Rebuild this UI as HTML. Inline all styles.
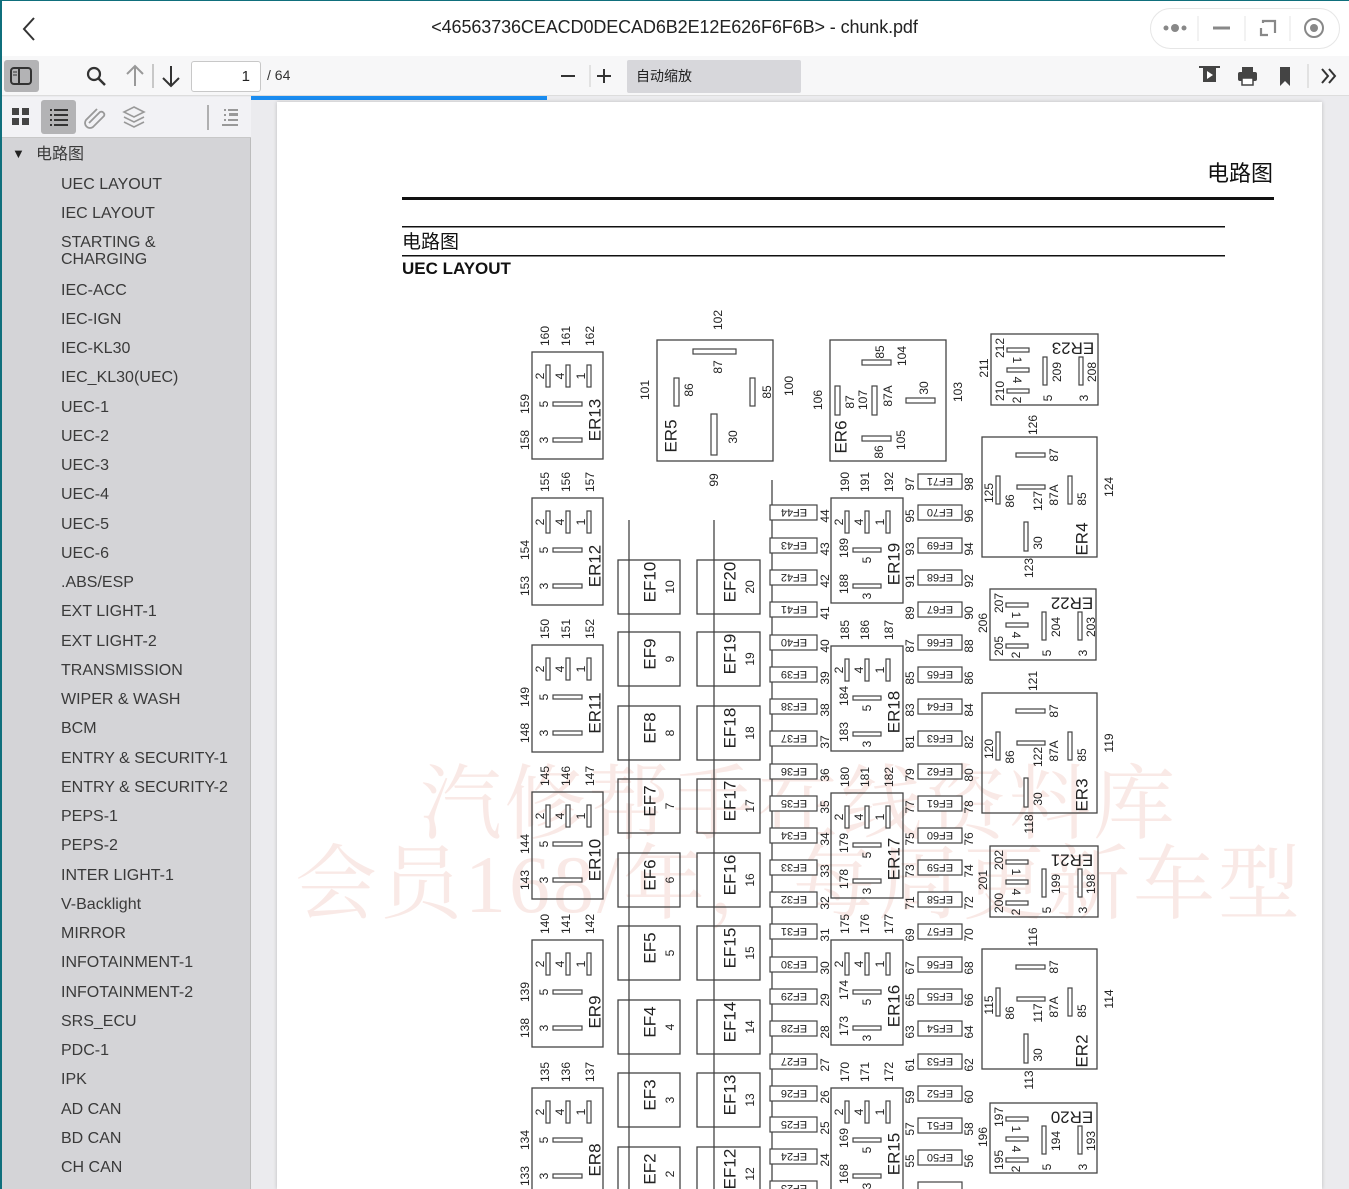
<!DOCTYPE html>
<html><head><meta charset="utf-8"><style>
*{margin:0;padding:0;box-sizing:border-box}
body{width:1349px;height:1189px;overflow:hidden;background:#ebebee;font-family:"Liberation Sans","Noto Sans CJK SC",sans-serif;position:relative}
.abs{position:absolute}
#title{left:0;top:0;width:1349px;height:56px;background:#fff}
#title .t{left:0;width:1349px;top:17px;text-align:center;font-size:18px;color:#222;letter-spacing:-0.1px}
#tb{left:0;top:56px;width:1349px;height:40px;background:#f7f7f8;border-bottom:1px solid #ddd}
#side{left:0;top:97px;width:251px;height:1092px;background:#d4d4d7;border-right:1px solid #bcbcbc}
#sidehead{left:0;top:97px;width:251px;height:41px;background:#f2f2f5;border-bottom:1px solid #c8c8c8}
.it{position:absolute;left:61px;font-size:16px;color:#3a3a3a;line-height:17px}
#page{left:277px;top:102px;width:1045px;height:1087px;background:#fff;box-shadow:0 0 4px rgba(0,0,0,.2)}
svg text{font-family:"Liberation Sans",sans-serif}
.b{fill:none;stroke:#444;stroke-width:1.3}
.p{fill:#fff;stroke:#444;stroke-width:1.2}
.n{font-size:12px;text-anchor:middle;dominant-baseline:central;fill:#222}
.L{font-size:17px;text-anchor:middle;dominant-baseline:central;fill:#222}
.s{font-size:11px;text-anchor:middle;dominant-baseline:central;fill:#222}
</style></head><body>
<div id="title" class="abs">
<svg class="abs" style="left:18px;top:16px" width="22" height="26"><path d="M16 2 L6 13 L16 24" fill="none" stroke="#333" stroke-width="2"/></svg>
<div class="abs t">&lt;46563736CEACD0DECAD6B2E12E626F6F6B&gt; - chunk.pdf</div>
<div class="abs" style="left:1150px;top:8px;width:190px;height:41px;border:1px solid #e6e6e6;border-radius:21px"></div>
<svg class="abs" style="left:1150px;top:8px" width="190" height="41">
<circle cx="16" cy="20" r="2.5" fill="#888"/><circle cx="25" cy="20" r="4" fill="#888"/><circle cx="34" cy="20" r="2.5" fill="#888"/>
<line x1="48" y1="8" x2="48" y2="33" stroke="#e6e6e6"/>
<line x1="63" y1="20" x2="80" y2="20" stroke="#888" stroke-width="3"/>
<line x1="95" y1="8" x2="95" y2="33" stroke="#e6e6e6"/>
<path d="M113 15 V13 H125 V25 M111 20 V27 H118" fill="none" stroke="#888" stroke-width="2.2"/>
<line x1="140" y1="8" x2="140" y2="33" stroke="#e6e6e6"/>
<circle cx="164" cy="20" r="9" fill="none" stroke="#888" stroke-width="2"/><circle cx="164" cy="20" r="4" fill="#888"/>
</svg>
</div>
<div id="tb" class="abs">
<div class="abs" style="left:4px;top:4px;width:35px;height:32px;background:#b3b3b5;border-radius:3px"></div>
<svg class="abs" style="left:0;top:0" width="1349" height="40">
<rect x="11" y="12" width="20" height="16" rx="3" fill="none" stroke="#333" stroke-width="2"/><line x1="19" y1="12" x2="19" y2="28" stroke="#333" stroke-width="2"/><line x1="13" y1="16" x2="17" y2="16" stroke="#333"/><line x1="13" y1="19" x2="17" y2="19" stroke="#333"/>
<circle cx="94" cy="18" r="6" fill="none" stroke="#333" stroke-width="2.2"/><line x1="98" y1="22" x2="105" y2="29" stroke="#333" stroke-width="2.5"/>
<path d="M135 30 V10 M127 18 L135 10 L143 18" fill="none" stroke="#999" stroke-width="2"/>
<line x1="153" y1="8" x2="153" y2="32" stroke="#999"/>
<path d="M171 10 V30 M163 22 L171 30 L179 22" fill="none" stroke="#333" stroke-width="2"/>
<line x1="561" y1="20" x2="575" y2="20" stroke="#333" stroke-width="2"/>
<line x1="590" y1="9" x2="590" y2="31" stroke="#ccc"/>
<path d="M597 20 H611 M604 13 V27" stroke="#333" stroke-width="2"/>
<path d="M777 17 L781 21 L785 17" fill="none" stroke="#222" stroke-width="2"/>
<rect x="1203" y="12" width="13" height="14" fill="#444"/><path d="M1207 15 L1213 19 L1207 23Z" fill="#fff"/><line x1="1199" y1="11" x2="1220" y2="11" stroke="#444" stroke-width="2"/>
<rect x="1238" y="16" width="19" height="9" rx="2" fill="#444"/><rect x="1242" y="11" width="11" height="5" fill="#444"/><rect x="1242" y="22" width="11" height="7" fill="#fff" stroke="#444" stroke-width="1.5"/>
<path d="M1280 11 H1290 V30 L1285 25 L1280 30Z" fill="#444"/>
<line x1="1308" y1="8" x2="1308" y2="32" stroke="#ccc"/>
<path d="M1322 13 L1328 20 L1322 27 M1329 13 L1335 20 L1329 27" fill="none" stroke="#333" stroke-width="2"/>
</svg>
<div class="abs" style="left:191px;top:5px;width:70px;height:31px;background:#fff;border:1px solid #c8c8c8;border-radius:3px;text-align:right;padding-right:10px;font-size:15px;line-height:29px;color:#222">1</div>
<div class="abs" style="left:267px;top:11px;font-size:14px;color:#333">/ 64</div>
<div class="abs" style="left:627px;top:4px;width:174px;height:33px;background:#d7d7db;border-radius:2px;font-size:14px;line-height:33px;padding-left:9px;color:#222;font-family:'Liberation Sans','Noto Sans CJK SC',sans-serif">自动缩放</div>
</div>
<div class="abs" style="left:251px;top:96px;width:296px;height:4px;background:#1a8cf0"></div>
<div id="side" class="abs"></div>
<div id="sidehead" class="abs">
<div class="abs" style="left:41px;top:3px;width:35px;height:34px;background:#b3b3b5;border-radius:3px"></div>
<svg class="abs" style="left:0;top:0" width="251" height="41">
<rect x="12" y="11" width="7" height="7" fill="#444"/><rect x="22" y="11" width="7" height="7" fill="#444"/><rect x="12" y="21" width="7" height="7" fill="#444"/><rect x="22" y="21" width="7" height="7" fill="#444"/>
<g fill="#333"><rect x="50" y="12" width="2" height="2"/><rect x="54" y="12" width="14" height="2"/><rect x="50" y="17" width="2" height="2"/><rect x="54" y="17" width="14" height="2"/><rect x="50" y="22" width="2" height="2"/><rect x="54" y="22" width="14" height="2"/><rect x="50" y="27" width="2" height="2"/><rect x="54" y="27" width="14" height="2"/></g>
<path d="M89 26 L100 15 A3 3 0 0 1 104 19 L93 30 A5 5 0 0 1 86 23 L97 12" fill="none" stroke="#999" stroke-width="1.8"/>
<path d="M134 10 L144 15 L134 20 L124 15Z M124 20 L134 25 L144 20 M124 25 L134 30 L144 25" fill="none" stroke="#999" stroke-width="1.6"/>
<line x1="208" y1="8" x2="208" y2="33" stroke="#999" stroke-width="1.5"/>
<g fill="#999"><rect x="224" y="12" width="2" height="2"/><rect x="228" y="12" width="10" height="2"/><rect x="224" y="17" width="2" height="2"/><rect x="229" y="16" width="9" height="3"/><rect x="224" y="22" width="2" height="2"/><rect x="228" y="22" width="10" height="2"/><rect x="222" y="27" width="16" height="2"/></g>
</svg>
</div>
<div class="abs" style="left:12px;top:146px;font-size:13px;color:#222">▼</div>
<div class="it" style="top:146px;left:36px;font-family:'Liberation Sans','Noto Sans CJK SC',sans-serif">电路图</div>
<div class="it" style="top:176px">UEC LAYOUT</div>
<div class="it" style="top:205px">IEC LAYOUT</div>
<div class="it" style="top:234px">STARTING &amp;<br>CHARGING</div>
<div class="it" style="top:282px">IEC-ACC</div>
<div class="it" style="top:311px">IEC-IGN</div>
<div class="it" style="top:340px">IEC-KL30</div>
<div class="it" style="top:369px">IEC_KL30(UEC)</div>
<div class="it" style="top:399px">UEC-1</div>
<div class="it" style="top:428px">UEC-2</div>
<div class="it" style="top:457px">UEC-3</div>
<div class="it" style="top:486px">UEC-4</div>
<div class="it" style="top:516px">UEC-5</div>
<div class="it" style="top:545px">UEC-6</div>
<div class="it" style="top:574px">.ABS/ESP</div>
<div class="it" style="top:603px">EXT LIGHT-1</div>
<div class="it" style="top:633px">EXT LIGHT-2</div>
<div class="it" style="top:662px">TRANSMISSION</div>
<div class="it" style="top:691px">WIPER &amp; WASH</div>
<div class="it" style="top:720px">BCM</div>
<div class="it" style="top:750px">ENTRY &amp; SECURITY-1</div>
<div class="it" style="top:779px">ENTRY &amp; SECURITY-2</div>
<div class="it" style="top:808px">PEPS-1</div>
<div class="it" style="top:837px">PEPS-2</div>
<div class="it" style="top:867px">INTER LIGHT-1</div>
<div class="it" style="top:896px">V-Backlight</div>
<div class="it" style="top:925px">MIRROR</div>
<div class="it" style="top:954px">INFOTAINMENT-1</div>
<div class="it" style="top:984px">INFOTAINMENT-2</div>
<div class="it" style="top:1013px">SRS_ECU</div>
<div class="it" style="top:1042px">PDC-1</div>
<div class="it" style="top:1071px">IPK</div>
<div class="it" style="top:1101px">AD CAN</div>
<div class="it" style="top:1130px">BD CAN</div>
<div class="it" style="top:1159px">CH CAN</div>
<div id="page" class="abs"></div>
<svg class="abs" style="left:0;top:0" width="1349" height="1189">
<g font-family="'Liberation Sans','Noto Sans CJK SC',sans-serif">
<text x="1273" y="181" text-anchor="end" font-size="22" fill="#111" style="font-family:'Liberation Sans','Noto Sans CJK SC',sans-serif">电路图</text>
<rect x="402" y="197" width="872" height="3" fill="#111"/>
<rect x="402" y="226" width="823" height="1.5" fill="#111"/>
<text x="402" y="248" font-size="19" fill="#111" style="font-family:'Liberation Sans','Noto Sans CJK SC',sans-serif">电路图</text>
<rect x="402" y="255" width="823" height="1.5" fill="#111"/>
<text x="402" y="274" font-size="17" font-weight="bold" fill="#111">UEC LAYOUT</text>
</g>
<g opacity="0.22" fill="#e8a090">
<text x="420" y="832" font-size="82" textLength="755" style="font-family:'Liberation Serif','Noto Serif CJK SC',serif">汽修帮手在线资料库</text>
<text x="295" y="912" font-size="82" textLength="1005" style="font-family:'Liberation Serif','Noto Serif CJK SC',serif">会员168/年，每周更新车型</text>
</g>
<line x1="629" y1="520" x2="629" y2="1189" class="b"/>
<line x1="714" y1="520" x2="714" y2="1189" class="b"/>
<line x1="772" y1="480" x2="772" y2="1189" class="b"/>
<g transform="translate(657 340)"><rect class="b" width="116" height="121"/>
<rect class="p" x="36" y="9" width="43" height="5"/><rect class="p" x="17" y="38" width="5" height="28"/><rect class="p" x="93" y="38" width="5" height="28"/><rect class="p" x="54" y="74" width="6" height="41"/>
<text class="n" transform="translate(61 27) rotate(-90)">87</text><text class="n" transform="translate(32 50) rotate(-90)">86</text><text class="n" transform="translate(110 52) rotate(-90)">85</text><text class="n" transform="translate(76 97) rotate(-90)">30</text>
<text class="L" transform="translate(14 96) rotate(-90)">ER5</text>
<text class="n" transform="translate(61 -20) rotate(-90)">102</text><text class="n" transform="translate(-12 50) rotate(-90)">101</text><text class="n" transform="translate(132 46) rotate(-90)">100</text><text class="n" transform="translate(57 140) rotate(-90)">99</text></g>
<g transform="translate(830 340)"><rect class="b" width="116" height="121"/>
<rect class="p" x="32" y="20" width="29" height="5"/><rect class="p" x="5" y="46" width="5" height="29"/><rect class="p" x="42" y="46" width="5" height="29"/><rect class="p" x="76" y="58" width="29" height="5"/><rect class="p" x="32" y="96" width="29" height="5"/>
<text class="n" transform="translate(50 12) rotate(-90)">85</text><text class="n" transform="translate(72 16) rotate(-90)">104</text><text class="n" transform="translate(20 62) rotate(-90)">87</text><text class="n" transform="translate(33 60) rotate(-90)">107</text><text class="n" transform="translate(58 56) rotate(-90)">87A</text><text class="n" transform="translate(94 48) rotate(-90)">30</text><text class="n" transform="translate(49 112) rotate(-90)">86</text><text class="n" transform="translate(71 100) rotate(-90)">105</text>
<text class="L" transform="translate(11 97) rotate(-90)">ER6</text>
<text class="n" transform="translate(-12 60) rotate(-90)">106</text><text class="n" transform="translate(128 52) rotate(-90)">103</text></g>
<g transform="translate(532 352)"><rect class="b" width="71" height="107"/><rect class="p" x="14" y="13" width="4" height="22"/><rect class="p" x="34" y="13" width="4" height="22"/><rect class="p" x="55" y="13" width="4" height="22"/><rect class="p" x="21" y="50" width="29" height="4"/><rect class="p" x="21" y="86" width="29" height="4"/><text class="n" transform="translate(8 24) rotate(-90)">2</text><text class="n" transform="translate(28 24) rotate(-90)">4</text><text class="n" transform="translate(49 24) rotate(-90)">1</text><text class="n" transform="translate(12 52) rotate(-90)">5</text><text class="n" transform="translate(12 88) rotate(-90)">3</text><text class="L" transform="translate(63 68) rotate(-90)">ER13</text><text class="n" transform="translate(13 -16) rotate(-90)">160</text><text class="n" transform="translate(34 -16) rotate(-90)">161</text><text class="n" transform="translate(58 -16) rotate(-90)">162</text><text class="n" transform="translate(-7 52) rotate(-90)">159</text><text class="n" transform="translate(-7 88) rotate(-90)">158</text></g>
<g transform="translate(532 498)"><rect class="b" width="71" height="107"/><rect class="p" x="14" y="13" width="4" height="22"/><rect class="p" x="34" y="13" width="4" height="22"/><rect class="p" x="55" y="13" width="4" height="22"/><rect class="p" x="21" y="50" width="29" height="4"/><rect class="p" x="21" y="86" width="29" height="4"/><text class="n" transform="translate(8 24) rotate(-90)">2</text><text class="n" transform="translate(28 24) rotate(-90)">4</text><text class="n" transform="translate(49 24) rotate(-90)">1</text><text class="n" transform="translate(12 52) rotate(-90)">5</text><text class="n" transform="translate(12 88) rotate(-90)">3</text><text class="L" transform="translate(63 68) rotate(-90)">ER12</text><text class="n" transform="translate(13 -16) rotate(-90)">155</text><text class="n" transform="translate(34 -16) rotate(-90)">156</text><text class="n" transform="translate(58 -16) rotate(-90)">157</text><text class="n" transform="translate(-7 52) rotate(-90)">154</text><text class="n" transform="translate(-7 88) rotate(-90)">153</text></g>
<g transform="translate(532 645)"><rect class="b" width="71" height="107"/><rect class="p" x="14" y="13" width="4" height="22"/><rect class="p" x="34" y="13" width="4" height="22"/><rect class="p" x="55" y="13" width="4" height="22"/><rect class="p" x="21" y="50" width="29" height="4"/><rect class="p" x="21" y="86" width="29" height="4"/><text class="n" transform="translate(8 24) rotate(-90)">2</text><text class="n" transform="translate(28 24) rotate(-90)">4</text><text class="n" transform="translate(49 24) rotate(-90)">1</text><text class="n" transform="translate(12 52) rotate(-90)">5</text><text class="n" transform="translate(12 88) rotate(-90)">3</text><text class="L" transform="translate(63 68) rotate(-90)">ER11</text><text class="n" transform="translate(13 -16) rotate(-90)">150</text><text class="n" transform="translate(34 -16) rotate(-90)">151</text><text class="n" transform="translate(58 -16) rotate(-90)">152</text><text class="n" transform="translate(-7 52) rotate(-90)">149</text><text class="n" transform="translate(-7 88) rotate(-90)">148</text></g>
<g transform="translate(532 792)"><rect class="b" width="71" height="107"/><rect class="p" x="14" y="13" width="4" height="22"/><rect class="p" x="34" y="13" width="4" height="22"/><rect class="p" x="55" y="13" width="4" height="22"/><rect class="p" x="21" y="50" width="29" height="4"/><rect class="p" x="21" y="86" width="29" height="4"/><text class="n" transform="translate(8 24) rotate(-90)">2</text><text class="n" transform="translate(28 24) rotate(-90)">4</text><text class="n" transform="translate(49 24) rotate(-90)">1</text><text class="n" transform="translate(12 52) rotate(-90)">5</text><text class="n" transform="translate(12 88) rotate(-90)">3</text><text class="L" transform="translate(63 68) rotate(-90)">ER10</text><text class="n" transform="translate(13 -16) rotate(-90)">145</text><text class="n" transform="translate(34 -16) rotate(-90)">146</text><text class="n" transform="translate(58 -16) rotate(-90)">147</text><text class="n" transform="translate(-7 52) rotate(-90)">144</text><text class="n" transform="translate(-7 88) rotate(-90)">143</text></g>
<g transform="translate(532 940)"><rect class="b" width="71" height="107"/><rect class="p" x="14" y="13" width="4" height="22"/><rect class="p" x="34" y="13" width="4" height="22"/><rect class="p" x="55" y="13" width="4" height="22"/><rect class="p" x="21" y="50" width="29" height="4"/><rect class="p" x="21" y="86" width="29" height="4"/><text class="n" transform="translate(8 24) rotate(-90)">2</text><text class="n" transform="translate(28 24) rotate(-90)">4</text><text class="n" transform="translate(49 24) rotate(-90)">1</text><text class="n" transform="translate(12 52) rotate(-90)">5</text><text class="n" transform="translate(12 88) rotate(-90)">3</text><text class="L" transform="translate(63 72) rotate(-90)">ER9</text><text class="n" transform="translate(13 -16) rotate(-90)">140</text><text class="n" transform="translate(34 -16) rotate(-90)">141</text><text class="n" transform="translate(58 -16) rotate(-90)">142</text><text class="n" transform="translate(-7 52) rotate(-90)">139</text><text class="n" transform="translate(-7 88) rotate(-90)">138</text></g>
<g transform="translate(532 1088)"><rect class="b" width="71" height="107"/><rect class="p" x="14" y="13" width="4" height="22"/><rect class="p" x="34" y="13" width="4" height="22"/><rect class="p" x="55" y="13" width="4" height="22"/><rect class="p" x="21" y="50" width="29" height="4"/><rect class="p" x="21" y="86" width="29" height="4"/><text class="n" transform="translate(8 24) rotate(-90)">2</text><text class="n" transform="translate(28 24) rotate(-90)">4</text><text class="n" transform="translate(49 24) rotate(-90)">1</text><text class="n" transform="translate(12 52) rotate(-90)">5</text><text class="n" transform="translate(12 88) rotate(-90)">3</text><text class="L" transform="translate(63 72) rotate(-90)">ER8</text><text class="n" transform="translate(13 -16) rotate(-90)">135</text><text class="n" transform="translate(34 -16) rotate(-90)">136</text><text class="n" transform="translate(58 -16) rotate(-90)">137</text><text class="n" transform="translate(-7 52) rotate(-90)">134</text><text class="n" transform="translate(-7 88) rotate(-90)">133</text></g>
<g transform="translate(831 498)"><rect class="b" width="72" height="105"/><rect class="p" x="14" y="13" width="4" height="22"/><rect class="p" x="34" y="13" width="4" height="22"/><rect class="p" x="55" y="13" width="4" height="22"/><rect class="p" x="22" y="50" width="28" height="4"/><rect class="p" x="22" y="86" width="28" height="4"/><text class="n" transform="translate(8 24) rotate(-90)">2</text><text class="n" transform="translate(28 24) rotate(-90)">4</text><text class="n" transform="translate(49 24) rotate(-90)">1</text><text class="n" transform="translate(13 50) rotate(-90)">189</text><text class="n" transform="translate(36 62) rotate(-90)">5</text><text class="n" transform="translate(13 86) rotate(-90)">188</text><text class="n" transform="translate(36 98) rotate(-90)">3</text><text class="L" transform="translate(63 66) rotate(-90)">ER19</text><text class="n" transform="translate(14 -16) rotate(-90)">190</text><text class="n" transform="translate(34 -16) rotate(-90)">191</text><text class="n" transform="translate(58 -16) rotate(-90)">192</text></g>
<g transform="translate(831 646)"><rect class="b" width="72" height="105"/><rect class="p" x="14" y="13" width="4" height="22"/><rect class="p" x="34" y="13" width="4" height="22"/><rect class="p" x="55" y="13" width="4" height="22"/><rect class="p" x="22" y="50" width="28" height="4"/><rect class="p" x="22" y="86" width="28" height="4"/><text class="n" transform="translate(8 24) rotate(-90)">2</text><text class="n" transform="translate(28 24) rotate(-90)">4</text><text class="n" transform="translate(49 24) rotate(-90)">1</text><text class="n" transform="translate(13 50) rotate(-90)">184</text><text class="n" transform="translate(36 62) rotate(-90)">5</text><text class="n" transform="translate(13 86) rotate(-90)">183</text><text class="n" transform="translate(36 98) rotate(-90)">3</text><text class="L" transform="translate(63 66) rotate(-90)">ER18</text><text class="n" transform="translate(14 -16) rotate(-90)">185</text><text class="n" transform="translate(34 -16) rotate(-90)">186</text><text class="n" transform="translate(58 -16) rotate(-90)">187</text></g>
<g transform="translate(831 793)"><rect class="b" width="72" height="105"/><rect class="p" x="14" y="13" width="4" height="22"/><rect class="p" x="34" y="13" width="4" height="22"/><rect class="p" x="55" y="13" width="4" height="22"/><rect class="p" x="22" y="50" width="28" height="4"/><rect class="p" x="22" y="86" width="28" height="4"/><text class="n" transform="translate(8 24) rotate(-90)">2</text><text class="n" transform="translate(28 24) rotate(-90)">4</text><text class="n" transform="translate(49 24) rotate(-90)">1</text><text class="n" transform="translate(13 50) rotate(-90)">179</text><text class="n" transform="translate(36 62) rotate(-90)">5</text><text class="n" transform="translate(13 86) rotate(-90)">178</text><text class="n" transform="translate(36 98) rotate(-90)">3</text><text class="L" transform="translate(63 66) rotate(-90)">ER17</text><text class="n" transform="translate(14 -16) rotate(-90)">180</text><text class="n" transform="translate(34 -16) rotate(-90)">181</text><text class="n" transform="translate(58 -16) rotate(-90)">182</text></g>
<g transform="translate(831 940)"><rect class="b" width="72" height="105"/><rect class="p" x="14" y="13" width="4" height="22"/><rect class="p" x="34" y="13" width="4" height="22"/><rect class="p" x="55" y="13" width="4" height="22"/><rect class="p" x="22" y="50" width="28" height="4"/><rect class="p" x="22" y="86" width="28" height="4"/><text class="n" transform="translate(8 24) rotate(-90)">2</text><text class="n" transform="translate(28 24) rotate(-90)">4</text><text class="n" transform="translate(49 24) rotate(-90)">1</text><text class="n" transform="translate(13 50) rotate(-90)">174</text><text class="n" transform="translate(36 62) rotate(-90)">5</text><text class="n" transform="translate(13 86) rotate(-90)">173</text><text class="n" transform="translate(36 98) rotate(-90)">3</text><text class="L" transform="translate(63 66) rotate(-90)">ER16</text><text class="n" transform="translate(14 -16) rotate(-90)">175</text><text class="n" transform="translate(34 -16) rotate(-90)">176</text><text class="n" transform="translate(58 -16) rotate(-90)">177</text></g>
<g transform="translate(831 1088)"><rect class="b" width="72" height="105"/><rect class="p" x="14" y="13" width="4" height="22"/><rect class="p" x="34" y="13" width="4" height="22"/><rect class="p" x="55" y="13" width="4" height="22"/><rect class="p" x="22" y="50" width="28" height="4"/><rect class="p" x="22" y="86" width="28" height="4"/><text class="n" transform="translate(8 24) rotate(-90)">2</text><text class="n" transform="translate(28 24) rotate(-90)">4</text><text class="n" transform="translate(49 24) rotate(-90)">1</text><text class="n" transform="translate(13 50) rotate(-90)">169</text><text class="n" transform="translate(36 62) rotate(-90)">5</text><text class="n" transform="translate(13 86) rotate(-90)">168</text><text class="n" transform="translate(36 98) rotate(-90)">3</text><text class="L" transform="translate(63 66) rotate(-90)">ER15</text><text class="n" transform="translate(14 -16) rotate(-90)">170</text><text class="n" transform="translate(34 -16) rotate(-90)">171</text><text class="n" transform="translate(58 -16) rotate(-90)">172</text></g>
<g>
<rect class="b" x="618" y="560" width="62" height="54"/><text class="L" transform="translate(650 582) rotate(-90)">EF10</text><text class="n" transform="translate(670 587) rotate(-90)">10</text>
<rect class="b" x="618" y="632" width="62" height="54"/><text class="L" transform="translate(650 654) rotate(-90)">EF9</text><text class="n" transform="translate(670 659) rotate(-90)">9</text>
<rect class="b" x="618" y="706" width="62" height="54"/><text class="L" transform="translate(650 728) rotate(-90)">EF8</text><text class="n" transform="translate(670 733) rotate(-90)">8</text>
<rect class="b" x="618" y="779" width="62" height="54"/><text class="L" transform="translate(650 801) rotate(-90)">EF7</text><text class="n" transform="translate(670 806) rotate(-90)">7</text>
<rect class="b" x="618" y="853" width="62" height="54"/><text class="L" transform="translate(650 875) rotate(-90)">EF6</text><text class="n" transform="translate(670 880) rotate(-90)">6</text>
<rect class="b" x="618" y="926" width="62" height="54"/><text class="L" transform="translate(650 948) rotate(-90)">EF5</text><text class="n" transform="translate(670 953) rotate(-90)">5</text>
<rect class="b" x="618" y="1000" width="62" height="54"/><text class="L" transform="translate(650 1022) rotate(-90)">EF4</text><text class="n" transform="translate(670 1027) rotate(-90)">4</text>
<rect class="b" x="618" y="1073" width="62" height="54"/><text class="L" transform="translate(650 1095) rotate(-90)">EF3</text><text class="n" transform="translate(670 1100) rotate(-90)">3</text>
<rect class="b" x="618" y="1147" width="62" height="54"/><text class="L" transform="translate(650 1169) rotate(-90)">EF2</text><text class="n" transform="translate(670 1174) rotate(-90)">2</text>
<rect class="b" x="697" y="560" width="63" height="54"/><text class="L" transform="translate(730 582) rotate(-90)">EF20</text><text class="n" transform="translate(750 587) rotate(-90)">20</text>
<rect class="b" x="697" y="632" width="63" height="54"/><text class="L" transform="translate(730 654) rotate(-90)">EF19</text><text class="n" transform="translate(750 659) rotate(-90)">19</text>
<rect class="b" x="697" y="706" width="63" height="54"/><text class="L" transform="translate(730 728) rotate(-90)">EF18</text><text class="n" transform="translate(750 733) rotate(-90)">18</text>
<rect class="b" x="697" y="779" width="63" height="54"/><text class="L" transform="translate(730 801) rotate(-90)">EF17</text><text class="n" transform="translate(750 806) rotate(-90)">17</text>
<rect class="b" x="697" y="853" width="63" height="54"/><text class="L" transform="translate(730 875) rotate(-90)">EF16</text><text class="n" transform="translate(750 880) rotate(-90)">16</text>
<rect class="b" x="697" y="926" width="63" height="54"/><text class="L" transform="translate(730 948) rotate(-90)">EF15</text><text class="n" transform="translate(750 953) rotate(-90)">15</text>
<rect class="b" x="697" y="1000" width="63" height="54"/><text class="L" transform="translate(730 1022) rotate(-90)">EF14</text><text class="n" transform="translate(750 1027) rotate(-90)">14</text>
<rect class="b" x="697" y="1073" width="63" height="54"/><text class="L" transform="translate(730 1095) rotate(-90)">EF13</text><text class="n" transform="translate(750 1100) rotate(-90)">13</text>
<rect class="b" x="697" y="1147" width="63" height="54"/><text class="L" transform="translate(730 1169) rotate(-90)">EF12</text><text class="n" transform="translate(750 1174) rotate(-90)">12</text>
</g>
<g>
<rect class="p" x="770" y="505" width="47" height="15"/><text class="s" transform="translate(794 512) rotate(180)">EF44</text><text class="n" transform="translate(825 516) rotate(-90)">44</text>
<rect class="p" x="770" y="538" width="47" height="15"/><text class="s" transform="translate(794 545) rotate(180)">EF43</text><text class="n" transform="translate(825 549) rotate(-90)">43</text>
<rect class="p" x="770" y="570" width="47" height="15"/><text class="s" transform="translate(794 577) rotate(180)">EF42</text><text class="n" transform="translate(825 581) rotate(-90)">42</text>
<rect class="p" x="770" y="602" width="47" height="15"/><text class="s" transform="translate(794 609) rotate(180)">EF41</text><text class="n" transform="translate(825 613) rotate(-90)">41</text>
<rect class="p" x="770" y="635" width="47" height="15"/><text class="s" transform="translate(794 642) rotate(180)">EF40</text><text class="n" transform="translate(825 646) rotate(-90)">40</text>
<rect class="p" x="770" y="667" width="47" height="15"/><text class="s" transform="translate(794 674) rotate(180)">EF39</text><text class="n" transform="translate(825 678) rotate(-90)">39</text>
<rect class="p" x="770" y="699" width="47" height="15"/><text class="s" transform="translate(794 706) rotate(180)">EF38</text><text class="n" transform="translate(825 710) rotate(-90)">38</text>
<rect class="p" x="770" y="731" width="47" height="15"/><text class="s" transform="translate(794 738) rotate(180)">EF37</text><text class="n" transform="translate(825 742) rotate(-90)">37</text>
<rect class="p" x="770" y="764" width="47" height="15"/><text class="s" transform="translate(794 771) rotate(180)">EF36</text><text class="n" transform="translate(825 775) rotate(-90)">36</text>
<rect class="p" x="770" y="796" width="47" height="15"/><text class="s" transform="translate(794 803) rotate(180)">EF35</text><text class="n" transform="translate(825 807) rotate(-90)">35</text>
<rect class="p" x="770" y="828" width="47" height="15"/><text class="s" transform="translate(794 835) rotate(180)">EF34</text><text class="n" transform="translate(825 839) rotate(-90)">34</text>
<rect class="p" x="770" y="860" width="47" height="15"/><text class="s" transform="translate(794 867) rotate(180)">EF33</text><text class="n" transform="translate(825 871) rotate(-90)">33</text>
<rect class="p" x="770" y="892" width="47" height="15"/><text class="s" transform="translate(794 899) rotate(180)">EF32</text><text class="n" transform="translate(825 903) rotate(-90)">32</text>
<rect class="p" x="770" y="924" width="47" height="15"/><text class="s" transform="translate(794 931) rotate(180)">EF31</text><text class="n" transform="translate(825 935) rotate(-90)">31</text>
<rect class="p" x="770" y="957" width="47" height="15"/><text class="s" transform="translate(794 964) rotate(180)">EF30</text><text class="n" transform="translate(825 968) rotate(-90)">30</text>
<rect class="p" x="770" y="989" width="47" height="15"/><text class="s" transform="translate(794 996) rotate(180)">EF29</text><text class="n" transform="translate(825 1000) rotate(-90)">29</text>
<rect class="p" x="770" y="1021" width="47" height="15"/><text class="s" transform="translate(794 1028) rotate(180)">EF28</text><text class="n" transform="translate(825 1032) rotate(-90)">28</text>
<rect class="p" x="770" y="1054" width="47" height="15"/><text class="s" transform="translate(794 1061) rotate(180)">EF27</text><text class="n" transform="translate(825 1065) rotate(-90)">27</text>
<rect class="p" x="770" y="1086" width="47" height="15"/><text class="s" transform="translate(794 1093) rotate(180)">EF26</text><text class="n" transform="translate(825 1097) rotate(-90)">26</text>
<rect class="p" x="770" y="1117" width="47" height="15"/><text class="s" transform="translate(794 1124) rotate(180)">EF25</text><text class="n" transform="translate(825 1128) rotate(-90)">25</text>
<rect class="p" x="770" y="1149" width="47" height="15"/><text class="s" transform="translate(794 1156) rotate(180)">EF24</text><text class="n" transform="translate(825 1160) rotate(-90)">24</text>
<rect class="p" x="770" y="1181" width="47" height="15"/><text class="s" transform="translate(794 1188) rotate(180)">EF23</text>
</g>
<g>
<rect class="p" x="918" y="474" width="44" height="15"/><text class="s" transform="translate(940 481) rotate(180)">EF71</text><text class="n" transform="translate(910 484) rotate(-90)">97</text><text class="n" transform="translate(969 484) rotate(-90)">98</text>
<rect class="p" x="918" y="505" width="44" height="15"/><text class="s" transform="translate(940 512) rotate(180)">EF70</text><text class="n" transform="translate(910 516) rotate(-90)">95</text><text class="n" transform="translate(969 516) rotate(-90)">96</text>
<rect class="p" x="918" y="538" width="44" height="15"/><text class="s" transform="translate(940 545) rotate(180)">EF69</text><text class="n" transform="translate(910 549) rotate(-90)">93</text><text class="n" transform="translate(969 549) rotate(-90)">94</text>
<rect class="p" x="918" y="570" width="44" height="15"/><text class="s" transform="translate(940 577) rotate(180)">EF68</text><text class="n" transform="translate(910 581) rotate(-90)">91</text><text class="n" transform="translate(969 581) rotate(-90)">92</text>
<rect class="p" x="918" y="602" width="44" height="15"/><text class="s" transform="translate(940 609) rotate(180)">EF67</text><text class="n" transform="translate(910 613) rotate(-90)">89</text><text class="n" transform="translate(969 613) rotate(-90)">90</text>
<rect class="p" x="918" y="635" width="44" height="15"/><text class="s" transform="translate(940 642) rotate(180)">EF66</text><text class="n" transform="translate(910 646) rotate(-90)">87</text><text class="n" transform="translate(969 646) rotate(-90)">88</text>
<rect class="p" x="918" y="667" width="44" height="15"/><text class="s" transform="translate(940 674) rotate(180)">EF65</text><text class="n" transform="translate(910 678) rotate(-90)">85</text><text class="n" transform="translate(969 678) rotate(-90)">86</text>
<rect class="p" x="918" y="699" width="44" height="15"/><text class="s" transform="translate(940 706) rotate(180)">EF64</text><text class="n" transform="translate(910 710) rotate(-90)">83</text><text class="n" transform="translate(969 710) rotate(-90)">84</text>
<rect class="p" x="918" y="731" width="44" height="15"/><text class="s" transform="translate(940 738) rotate(180)">EF63</text><text class="n" transform="translate(910 742) rotate(-90)">81</text><text class="n" transform="translate(969 742) rotate(-90)">82</text>
<rect class="p" x="918" y="764" width="44" height="15"/><text class="s" transform="translate(940 771) rotate(180)">EF62</text><text class="n" transform="translate(910 775) rotate(-90)">79</text><text class="n" transform="translate(969 775) rotate(-90)">80</text>
<rect class="p" x="918" y="796" width="44" height="15"/><text class="s" transform="translate(940 803) rotate(180)">EF61</text><text class="n" transform="translate(910 807) rotate(-90)">77</text><text class="n" transform="translate(969 807) rotate(-90)">78</text>
<rect class="p" x="918" y="828" width="44" height="15"/><text class="s" transform="translate(940 835) rotate(180)">EF60</text><text class="n" transform="translate(910 839) rotate(-90)">75</text><text class="n" transform="translate(969 839) rotate(-90)">76</text>
<rect class="p" x="918" y="860" width="44" height="15"/><text class="s" transform="translate(940 867) rotate(180)">EF59</text><text class="n" transform="translate(910 871) rotate(-90)">73</text><text class="n" transform="translate(969 871) rotate(-90)">74</text>
<rect class="p" x="918" y="892" width="44" height="15"/><text class="s" transform="translate(940 899) rotate(180)">EF58</text><text class="n" transform="translate(910 903) rotate(-90)">71</text><text class="n" transform="translate(969 903) rotate(-90)">72</text>
<rect class="p" x="918" y="924" width="44" height="15"/><text class="s" transform="translate(940 931) rotate(180)">EF57</text><text class="n" transform="translate(910 935) rotate(-90)">69</text><text class="n" transform="translate(969 935) rotate(-90)">70</text>
<rect class="p" x="918" y="957" width="44" height="15"/><text class="s" transform="translate(940 964) rotate(180)">EF56</text><text class="n" transform="translate(910 968) rotate(-90)">67</text><text class="n" transform="translate(969 968) rotate(-90)">68</text>
<rect class="p" x="918" y="989" width="44" height="15"/><text class="s" transform="translate(940 996) rotate(180)">EF55</text><text class="n" transform="translate(910 1000) rotate(-90)">65</text><text class="n" transform="translate(969 1000) rotate(-90)">66</text>
<rect class="p" x="918" y="1021" width="44" height="15"/><text class="s" transform="translate(940 1028) rotate(180)">EF54</text><text class="n" transform="translate(910 1032) rotate(-90)">63</text><text class="n" transform="translate(969 1032) rotate(-90)">64</text>
<rect class="p" x="918" y="1054" width="44" height="15"/><text class="s" transform="translate(940 1061) rotate(180)">EF53</text><text class="n" transform="translate(910 1065) rotate(-90)">61</text><text class="n" transform="translate(969 1065) rotate(-90)">62</text>
<rect class="p" x="918" y="1086" width="44" height="15"/><text class="s" transform="translate(940 1093) rotate(180)">EF52</text><text class="n" transform="translate(910 1097) rotate(-90)">59</text><text class="n" transform="translate(969 1097) rotate(-90)">60</text>
<rect class="p" x="918" y="1118" width="44" height="15"/><text class="s" transform="translate(940 1125) rotate(180)">EF51</text><text class="n" transform="translate(910 1129) rotate(-90)">57</text><text class="n" transform="translate(969 1129) rotate(-90)">58</text>
<rect class="p" x="918" y="1150" width="44" height="15"/><text class="s" transform="translate(940 1157) rotate(180)">EF50</text><text class="n" transform="translate(910 1161) rotate(-90)">55</text><text class="n" transform="translate(969 1161) rotate(-90)">56</text>
<rect class="p" x="918" y="1182" width="44" height="15"/>
</g>
<g transform="translate(991 334)"><rect class="b" width="107" height="71"/><rect class="p" x="16" y="14" width="22" height="4"/><rect class="p" x="16" y="34" width="22" height="4"/><rect class="p" x="16" y="55" width="22" height="4"/><rect class="p" x="52" y="23" width="4" height="28"/><rect class="p" x="88" y="23" width="4" height="28"/><text class="L" transform="translate(82 14) rotate(180)">ER23</text><text class="n" transform="translate(9 14) rotate(-90)">212</text><text class="n" transform="translate(9 57) rotate(-90)">210</text><text class="n" transform="translate(-7 34) rotate(-90)">211</text><text class="n" transform="translate(26 26) rotate(90)">1</text><text class="n" transform="translate(26 46) rotate(90)">4</text><text class="n" transform="translate(26 66) rotate(-90)">2</text><text class="n" transform="translate(66 38) rotate(-90)">209</text><text class="n" transform="translate(101 38) rotate(-90)">208</text><text class="n" transform="translate(57 64) rotate(-90)">5</text><text class="n" transform="translate(93 64) rotate(-90)">3</text></g>
<g transform="translate(990 589)"><rect class="b" width="106" height="71"/><rect class="p" x="16" y="14" width="22" height="4"/><rect class="p" x="16" y="34" width="22" height="4"/><rect class="p" x="16" y="55" width="22" height="4"/><rect class="p" x="52" y="23" width="4" height="28"/><rect class="p" x="88" y="23" width="4" height="28"/><text class="L" transform="translate(82 14) rotate(180)">ER22</text><text class="n" transform="translate(9 14) rotate(-90)">207</text><text class="n" transform="translate(9 57) rotate(-90)">205</text><text class="n" transform="translate(-7 34) rotate(-90)">206</text><text class="n" transform="translate(26 26) rotate(90)">1</text><text class="n" transform="translate(26 46) rotate(90)">4</text><text class="n" transform="translate(26 66) rotate(-90)">2</text><text class="n" transform="translate(66 38) rotate(-90)">204</text><text class="n" transform="translate(101 38) rotate(-90)">203</text><text class="n" transform="translate(57 64) rotate(-90)">5</text><text class="n" transform="translate(93 64) rotate(-90)">3</text></g>
<g transform="translate(990 846)"><rect class="b" width="108" height="71"/><rect class="p" x="16" y="14" width="22" height="4"/><rect class="p" x="16" y="34" width="22" height="4"/><rect class="p" x="16" y="55" width="22" height="4"/><rect class="p" x="52" y="23" width="4" height="28"/><rect class="p" x="88" y="23" width="4" height="28"/><text class="L" transform="translate(82 14) rotate(180)">ER21</text><text class="n" transform="translate(9 14) rotate(-90)">202</text><text class="n" transform="translate(9 57) rotate(-90)">200</text><text class="n" transform="translate(-7 34) rotate(-90)">201</text><text class="n" transform="translate(26 26) rotate(90)">1</text><text class="n" transform="translate(26 46) rotate(90)">4</text><text class="n" transform="translate(26 66) rotate(-90)">2</text><text class="n" transform="translate(66 38) rotate(-90)">199</text><text class="n" transform="translate(101 38) rotate(-90)">198</text><text class="n" transform="translate(57 64) rotate(-90)">5</text><text class="n" transform="translate(93 64) rotate(-90)">3</text></g>
<g transform="translate(990 1103)"><rect class="b" width="107" height="70"/><rect class="p" x="16" y="14" width="22" height="4"/><rect class="p" x="16" y="34" width="22" height="4"/><rect class="p" x="16" y="55" width="22" height="4"/><rect class="p" x="52" y="23" width="4" height="28"/><rect class="p" x="88" y="23" width="4" height="28"/><text class="L" transform="translate(82 14) rotate(180)">ER20</text><text class="n" transform="translate(9 14) rotate(-90)">197</text><text class="n" transform="translate(9 57) rotate(-90)">195</text><text class="n" transform="translate(-7 34) rotate(-90)">196</text><text class="n" transform="translate(26 26) rotate(90)">1</text><text class="n" transform="translate(26 46) rotate(90)">4</text><text class="n" transform="translate(26 66) rotate(-90)">2</text><text class="n" transform="translate(66 38) rotate(-90)">194</text><text class="n" transform="translate(101 38) rotate(-90)">193</text><text class="n" transform="translate(57 64) rotate(-90)">5</text><text class="n" transform="translate(93 64) rotate(-90)">3</text></g>
<g transform="translate(982 437)"><rect class="b" width="115" height="120"/><rect class="p" x="34" y="16" width="29" height="4"/><rect class="p" x="14" y="39" width="4" height="28"/><rect class="p" x="35" y="48" width="28" height="4"/><rect class="p" x="86" y="39" width="4" height="28"/><rect class="p" x="42" y="85" width="4" height="29"/><text class="n" transform="translate(72 18) rotate(-90)">87</text><text class="n" transform="translate(7 56) rotate(-90)">125</text><text class="n" transform="translate(28 64) rotate(-90)">86</text><text class="n" transform="translate(56 64) rotate(-90)">127</text><text class="n" transform="translate(72 58) rotate(-90)">87A</text><text class="n" transform="translate(100 62) rotate(-90)">85</text><text class="n" transform="translate(56 106) rotate(-90)">30</text><text class="L" transform="translate(100 102) rotate(-90)">ER4</text><text class="n" transform="translate(51 -12) rotate(-90)">126</text><text class="n" transform="translate(127 50) rotate(-90)">124</text><text class="n" transform="translate(47 131) rotate(-90)">123</text></g>
<g transform="translate(982 693)"><rect class="b" width="115" height="120"/><rect class="p" x="34" y="16" width="29" height="4"/><rect class="p" x="14" y="39" width="4" height="28"/><rect class="p" x="35" y="48" width="28" height="4"/><rect class="p" x="86" y="39" width="4" height="28"/><rect class="p" x="42" y="85" width="4" height="29"/><text class="n" transform="translate(72 18) rotate(-90)">87</text><text class="n" transform="translate(7 56) rotate(-90)">120</text><text class="n" transform="translate(28 64) rotate(-90)">86</text><text class="n" transform="translate(56 64) rotate(-90)">122</text><text class="n" transform="translate(72 58) rotate(-90)">87A</text><text class="n" transform="translate(100 62) rotate(-90)">85</text><text class="n" transform="translate(56 106) rotate(-90)">30</text><text class="L" transform="translate(100 102) rotate(-90)">ER3</text><text class="n" transform="translate(51 -12) rotate(-90)">121</text><text class="n" transform="translate(127 50) rotate(-90)">119</text><text class="n" transform="translate(47 131) rotate(-90)">118</text></g>
<g transform="translate(982 949)"><rect class="b" width="115" height="120"/><rect class="p" x="34" y="16" width="29" height="4"/><rect class="p" x="14" y="39" width="4" height="28"/><rect class="p" x="35" y="48" width="28" height="4"/><rect class="p" x="86" y="39" width="4" height="28"/><rect class="p" x="42" y="85" width="4" height="29"/><text class="n" transform="translate(72 18) rotate(-90)">87</text><text class="n" transform="translate(7 56) rotate(-90)">115</text><text class="n" transform="translate(28 64) rotate(-90)">86</text><text class="n" transform="translate(56 64) rotate(-90)">117</text><text class="n" transform="translate(72 58) rotate(-90)">87A</text><text class="n" transform="translate(100 62) rotate(-90)">85</text><text class="n" transform="translate(56 106) rotate(-90)">30</text><text class="L" transform="translate(100 102) rotate(-90)">ER2</text><text class="n" transform="translate(51 -12) rotate(-90)">116</text><text class="n" transform="translate(127 50) rotate(-90)">114</text><text class="n" transform="translate(47 131) rotate(-90)">113</text></g>
</svg>
<div class="abs" style="left:0;top:0;width:2px;height:1189px;background:#0f6f7c"></div>
<div class="abs" style="left:0;top:0;width:1349px;height:1px;background:#0f6f7c"></div>
</body></html>
